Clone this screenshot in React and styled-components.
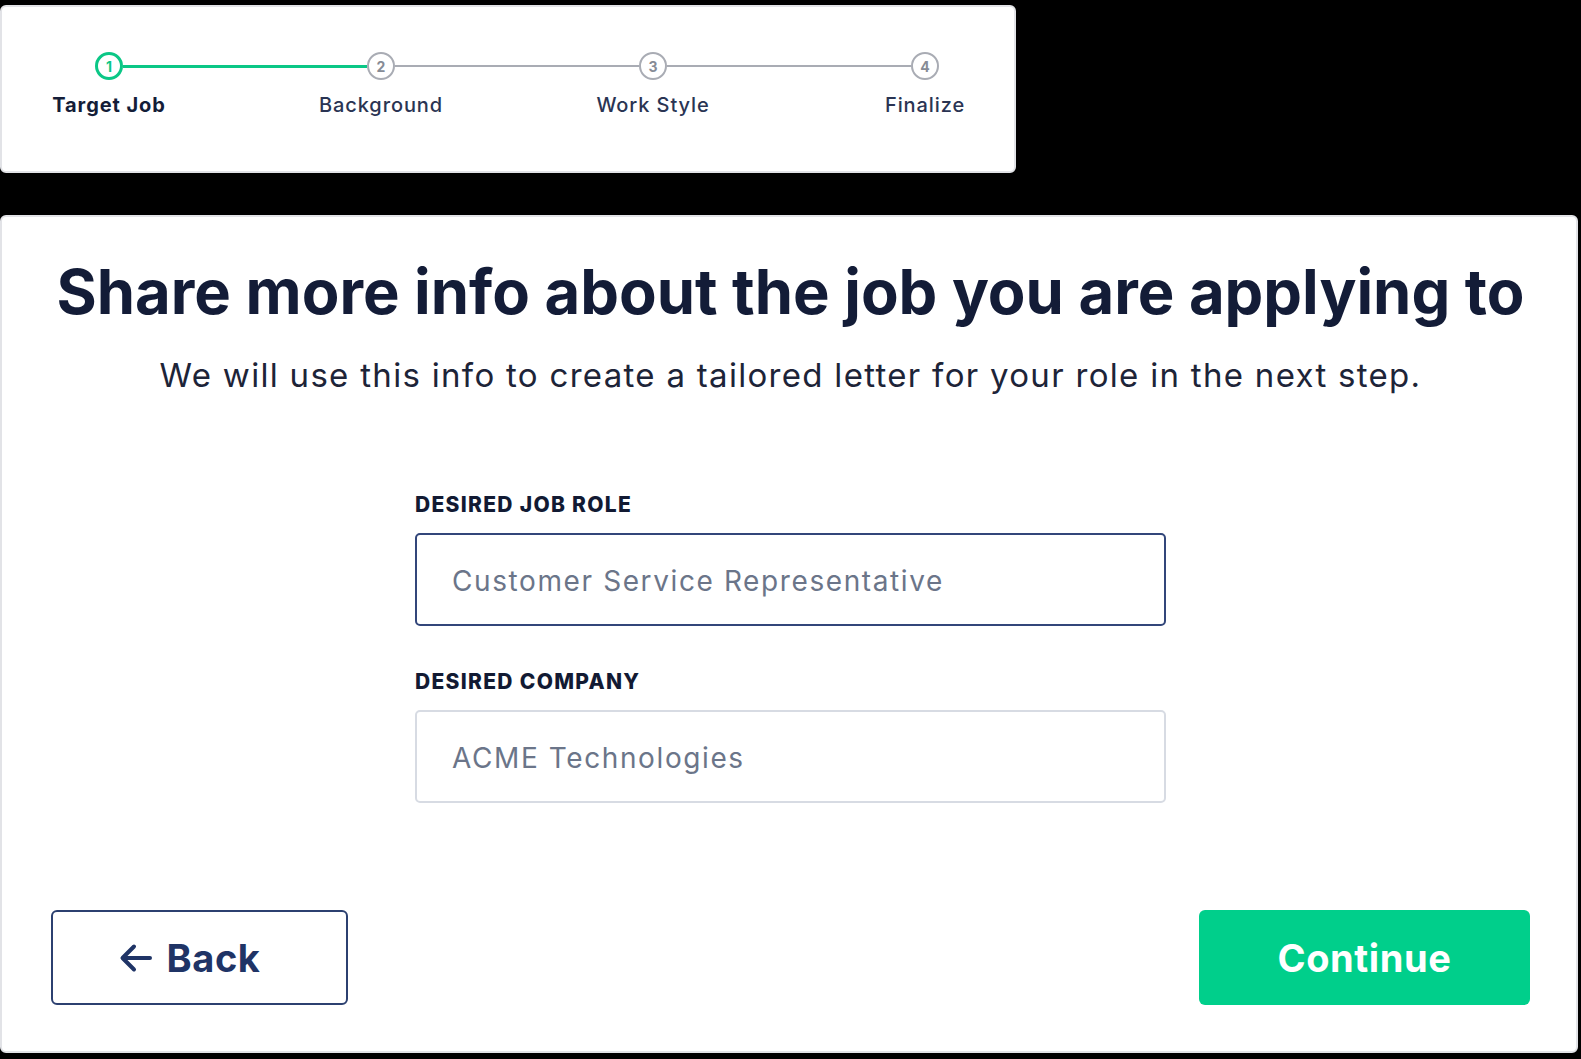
import React from "react";
import styled, { createGlobalStyle } from "styled-components";

const GlobalStyle = createGlobalStyle`
  html, body {
    margin: 0;
    padding: 0;
    background: #000;
  }
  body {
    font-family: "Inter", "Liberation Sans", sans-serif;
    -webkit-font-smoothing: antialiased;
  }
`;

const Page = styled.div`
  display: flex;
  flex-direction: column;
  align-items: flex-start;
  gap: 42px;
  padding-top: 5px;
  width: 1581px;
  height: 1059px;
  box-sizing: border-box;
  overflow: hidden;
`;

const StepperCard = styled.div`
  width: 1016px;
  height: 168px;
  box-sizing: border-box;
  background: #fff;
  border: 2px solid #e2e3e7;
  border-radius: 6px;
  padding-top: 45px;
`;

const Track = styled.div`
  display: flex;
  align-items: center;
  margin-left: 93px;
`;

const Dot = styled.div`
  width: 28px;
  height: 28px;
  box-sizing: border-box;
  border-radius: 50%;
  border: ${(p) => (p.active ? "3px solid #0bc786" : "2px solid #a9acb4")};
  color: ${(p) => (p.active ? "#0bc786" : "#868b96")};
  display: flex;
  align-items: center;
  justify-content: center;
  font-size: 14px;
  font-weight: 700;
  flex-shrink: 0;
`;

const Line = styled.div`
  width: 244px;
  height: ${(p) => (p.active ? "3px" : "2px")};
  background: ${(p) => (p.active ? "#0bc786" : "#a9acb4")};
`;

const Labels = styled.div`
  display: flex;
  margin-left: 27px;
  margin-top: 13px;
  gap: 112px;
`;

const StepLabel = styled.div`
  width: 160px;
  text-align: center;
  font-size: 20px;
  line-height: 24px;
  letter-spacing: 0.9px;
  font-weight: ${(p) => (p.active ? 700 : 500)};
  color: ${(p) => (p.active ? "#141d38" : "#2a3453")};
`;

const MainCard = styled.div`
  width: 1578px;
  height: 838px;
  box-sizing: border-box;
  background: #fff;
  border: 2px solid #e2e3e7;
  border-radius: 6px;
  padding: 38px 46px 46px 49px;
  display: flex;
  flex-direction: column;
  align-items: center;
`;

const Title = styled.h1`
  margin: 0;
  font-size: 61.5px;
  line-height: 74px;
  font-weight: 700;
  color: #131c37;
  text-align: center;
  white-space: nowrap;
`;

const Subtitle = styled.p`
  margin: 26px 0 0;
  font-size: 33px;
  line-height: 40px;
  letter-spacing: 1.3px;
  font-weight: 400;
  color: #1d2438;
  text-align: center;
  white-space: nowrap;
`;

const Form = styled.div`
  width: 751px;
  margin-top: 98px;
  display: flex;
  flex-direction: column;
`;

const Field = styled.div`
  display: flex;
  flex-direction: column;
  gap: 16px;
  & + & {
    margin-top: 44px;
  }
`;

const Label = styled.label`
  font-size: 21px;
  line-height: 24px;
  font-weight: 800;
  letter-spacing: 1.3px;
  color: #121a33;
  text-transform: uppercase;
`;

const Input = styled.input`
  height: 93px;
  box-sizing: border-box;
  border: 2px solid ${(p) => (p.focused ? "#32467a" : "#d7dbe3")};
  border-radius: 5px;
  padding: 3px 35px 0;
  font-family: inherit;
  font-size: 28px;
  letter-spacing: 1.6px;
  color: #1d2438;
  background: #fff;
  outline: none;
  &::placeholder {
    color: #6b7589;
  }
`;

const Actions = styled.div`
  align-self: stretch;
  margin-top: auto;
  display: flex;
  justify-content: space-between;
`;

const Button = styled.button`
  height: 95px;
  box-sizing: border-box;
  border-radius: 6px;
  font-family: inherit;
  font-size: 38px;
  font-weight: 700;
  letter-spacing: 0.6px;
  display: flex;
  align-items: center;
  justify-content: center;
  cursor: pointer;
`;

const BackButton = styled(Button)`
  width: 297px;
  gap: 14px;
  padding-right: 26px;
  background: #fff;
  border: 2px solid #2c4070;
  color: #1f3466;
`;

const ContinueButton = styled(Button)`
  width: 331px;
  background: #00cf8b;
  border: none;
  color: #fff;
`;

const steps = ["Target Job", "Background", "Work Style", "Finalize"];

function ArrowLeft() {
  return (
    <svg width="34" height="30" viewBox="0 0 34 30" fill="none">
      <path
        d="M32 15H5M16 3.5L4.5 15L16 26.5"
        stroke="#1f3466"
        strokeWidth="4"
        strokeLinecap="round"
        strokeLinejoin="round"
      />
    </svg>
  );
}

function Stepper({ current }) {
  return (
    <StepperCard>
      <Track>
        {steps.map((s, i) => (
          <React.Fragment key={s}>
            {i > 0 && <Line active={i <= current + 1} />}
            <Dot active={i <= current}>{i + 1}</Dot>
          </React.Fragment>
        ))}
      </Track>
      <Labels>
        {steps.map((s, i) => (
          <StepLabel key={s} active={i === current}>
            {s}
          </StepLabel>
        ))}
      </Labels>
    </StepperCard>
  );
}

export default function App() {
  return (
    <Page>
      <GlobalStyle />
      <Stepper current={0} />
      <MainCard>
        <Title>Share more info about the job you are applying to</Title>
        <Subtitle>
          We will use this info to create a tailored letter for your role in
          the next step.
        </Subtitle>
        <Form>
          <Field>
            <Label>Desired Job Role</Label>
            <Input focused placeholder="Customer Service Representative" />
          </Field>
          <Field>
            <Label>Desired Company</Label>
            <Input placeholder="ACME Technologies" />
          </Field>
        </Form>
        <Actions>
          <BackButton>
            <ArrowLeft />
            Back
          </BackButton>
          <ContinueButton>Continue</ContinueButton>
        </Actions>
      </MainCard>
    </Page>
  );
}
